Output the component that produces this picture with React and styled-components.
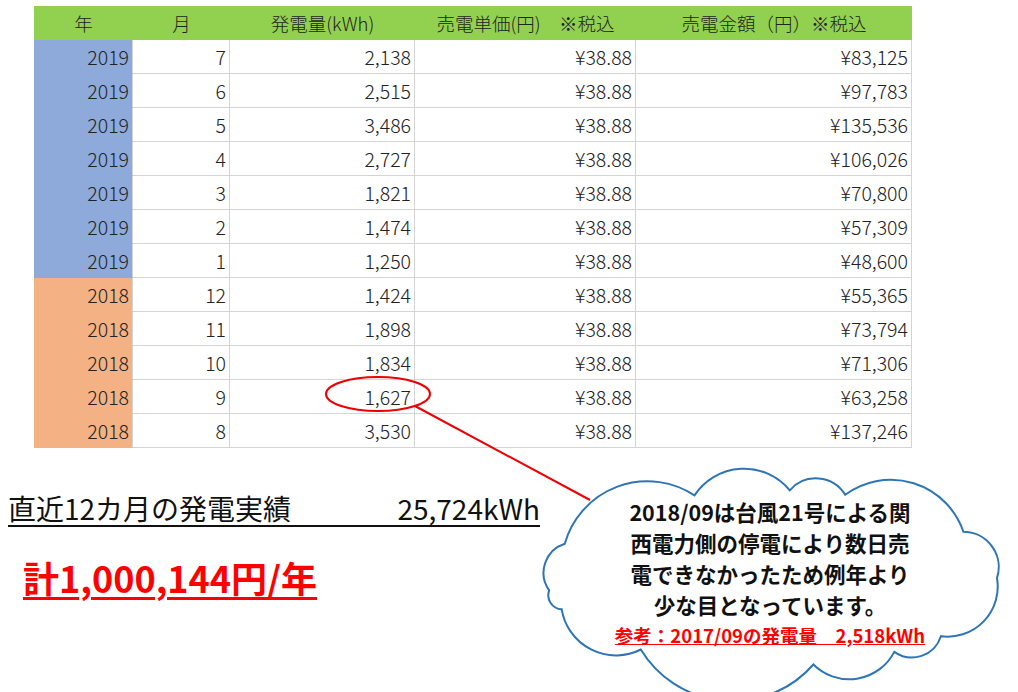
import React from "react";
import styled, { createGlobalStyle } from "styled-components";

const Global = createGlobalStyle`
  html, body { margin: 0; background: #fff; }
  body { font-family: "Noto Sans CJK JP", "Noto Sans", sans-serif; }
`;

const Page = styled.div`
  position: relative;
  width: 1018px;
  height: 692px;
  padding: 6px 0 0 34px;
  box-sizing: border-box;
  overflow: hidden;
`;

const Table = styled.div`
  display: grid;
  grid-template-columns: 99px 97px 185px 221px 276px;
  width: 878px;
`;

const Head = styled.div`
  background: #92d050;
  height: 34px;
  display: flex;
  align-items: center;
  justify-content: center;
  font-size: 18.5px;
  font-weight: 300;
  color: #222;
`;

const Cell = styled.div`
  height: 33px;
  border-bottom: 1.5px solid #d4d4d4;
  border-right: 1.5px solid #d4d4d4;
  background: ${(p) => p.$bg || "#fff"};
  border-color: ${(p) => (p.$bg ? p.$bg : "#d4d4d4")};
  border-right-color: #d4d4d4;
  display: flex;
  align-items: center;
  justify-content: flex-end;
  padding-right: 3px;
  font-size: 19.5px;
  font-weight: 300;
  color: #222;
`;

const Summary = styled.div`
  margin: 44px 0 0 -26px;
  display: flex;
  flex-direction: column;
  gap: 24px;
`;

const Line1 = styled.div`
  width: 532px;
  display: flex;
  justify-content: space-between;
  font-size: 28px;
  color: #111;
  border-bottom: 2px solid #111;
  line-height: 32px;
  padding-bottom: 1px;
`;

const Total = styled.div`
  margin-left: 15px;
  font-size: 36px;
  font-weight: 700;
  color: #f00;
  text-decoration: underline;
  text-decoration-thickness: 3px;
  text-underline-offset: 4px;
`;

const Overlay = styled.svg`
  position: absolute;
  left: 0;
  top: 0;
`;

const CloudText = styled.div`
  position: absolute;
  left: 560px;
  top: 496px;
  width: 420px;
  text-align: center;
  font-size: 21.5px;
  font-weight: 700;
  line-height: 31px;
  color: #111;
`;

const Ref = styled.div`
  margin-top: 0px;
  font-size: 18.5px;
  color: #f00;
  text-decoration: underline;
  white-space: nowrap;
`;

const rows = [
  [2019, 7, "2,138", "¥83,125"],
  [2019, 6, "2,515", "¥97,783"],
  [2019, 5, "3,486", "¥135,536"],
  [2019, 4, "2,727", "¥106,026"],
  [2019, 3, "1,821", "¥70,800"],
  [2019, 2, "1,474", "¥57,309"],
  [2019, 1, "1,250", "¥48,600"],
  [2018, 12, "1,424", "¥55,365"],
  [2018, 11, "1,898", "¥73,794"],
  [2018, 10, "1,834", "¥71,306"],
  [2018, 9, "1,627", "¥63,258"],
  [2018, 8, "3,530", "¥137,246"],
];

function cloudPath(cx, cy, rx, ry, n) {
  const pts = [];
  for (let i = 0; i < n; i++) {
    const a = (i / n) * Math.PI * 2 + 0.2 * Math.sin(i * 1.7);
    pts.push([cx + rx * Math.cos(a), cy + ry * Math.sin(a)]);
  }
  let d = `M${pts[0][0].toFixed(1)},${pts[0][1].toFixed(1)}`;
  for (let i = 1; i <= n; i++) {
    const p = pts[i % n];
    const q = pts[i - 1];
    const r = Math.hypot(p[0] - q[0], p[1] - q[1]) * 0.62;
    d += ` A${r.toFixed(1)},${r.toFixed(1)} 0 0 1 ${p[0].toFixed(1)},${p[1].toFixed(1)}`;
  }
  return d + " Z";
}

export default function App() {
  return (
    <Page>
      <Global />
      <Table>
        <Head>年</Head>
        <Head>月</Head>
        <Head>発電量(kWh)</Head>
        <Head>売電単価(円)　※税込</Head>
        <Head>売電金額（円）※税込</Head>
        {rows.map((r, i) => {
          const bg = r[0] === 2019 ? "#8eaadb" : "#f4b183";
          return (
            <React.Fragment key={i}>
              <Cell $bg={bg}>{r[0]}</Cell>
              <Cell>{r[1]}</Cell>
              <Cell>{r[2]}</Cell>
              <Cell>¥38.88</Cell>
              <Cell>{r[3]}</Cell>
            </React.Fragment>
          );
        })}
      </Table>
      <Summary>
        <Line1>
          <span>直近12カ月の発電実績</span>
          <span>25,724kWh</span>
        </Line1>
        <Total>計1,000,144円/年</Total>
      </Summary>
      <Overlay width="1018" height="692">
        <ellipse cx="378" cy="394" rx="52" ry="17" fill="none" stroke="#e00" strokeWidth="2" />
        <line x1="415" y1="406" x2="590" y2="500" stroke="#e00" strokeWidth="2" />
        <path d={cloudPath(772, 578, 225, 88, 12)} fill="#fff" stroke="#2e75b6" strokeWidth="2" />
      </Overlay>
      <CloudText>
        2018/09は台風21号による関<br />
        西電力側の停電により数日売<br />
        電できなかったため例年より<br />
        少な目となっています。
        <Ref>参考：2017/09の発電量　2,518kWh</Ref>
      </CloudText>
    </Page>
  );
}
